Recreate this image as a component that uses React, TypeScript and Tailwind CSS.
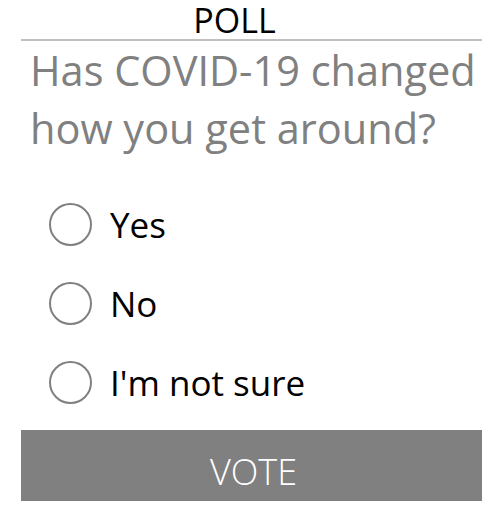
import React from "react";

const font = { fontFamily: '"Open Sans", "Noto Sans", sans-serif' };

export default function App() {
  const options = ["Yes", "No", "I'm not sure"];
  return (
    <div className="w-[502px] h-[517px] bg-white" style={font}>
      <div className="mx-[21px] w-[461px]">
        <div className="flex justify-center pr-[34px] h-[39px] items-end">
          <span className="text-[34px] leading-[38px] text-black">POLL</span>
        </div>
        <div className="h-[2px] bg-[#c0c0c0]" />
        <div className="pl-[9px] text-[41.5px] leading-[58px] text-[#808080]">
          Has COVID-19 changed how you get around?
        </div>
        <div className="flex flex-col mt-[46px] gap-[36px]">
          {options.map((o) => (
            <label key={o} className="flex items-center h-[43px] pl-[28px] gap-[18px]">
              <span className="w-[43px] h-[43px] rounded-full border-2 border-[#808080] shrink-0" />
              <span className="text-[35px] leading-[43px] text-black">{o}</span>
            </label>
          ))}
        </div>
        <button className="mt-[26px] w-full h-[71px] bg-[#808080] text-white text-[36px] font-light flex items-center justify-center pl-[4px] pt-[13px]">
          VOTE
        </button>
      </div>
    </div>
  );
}
